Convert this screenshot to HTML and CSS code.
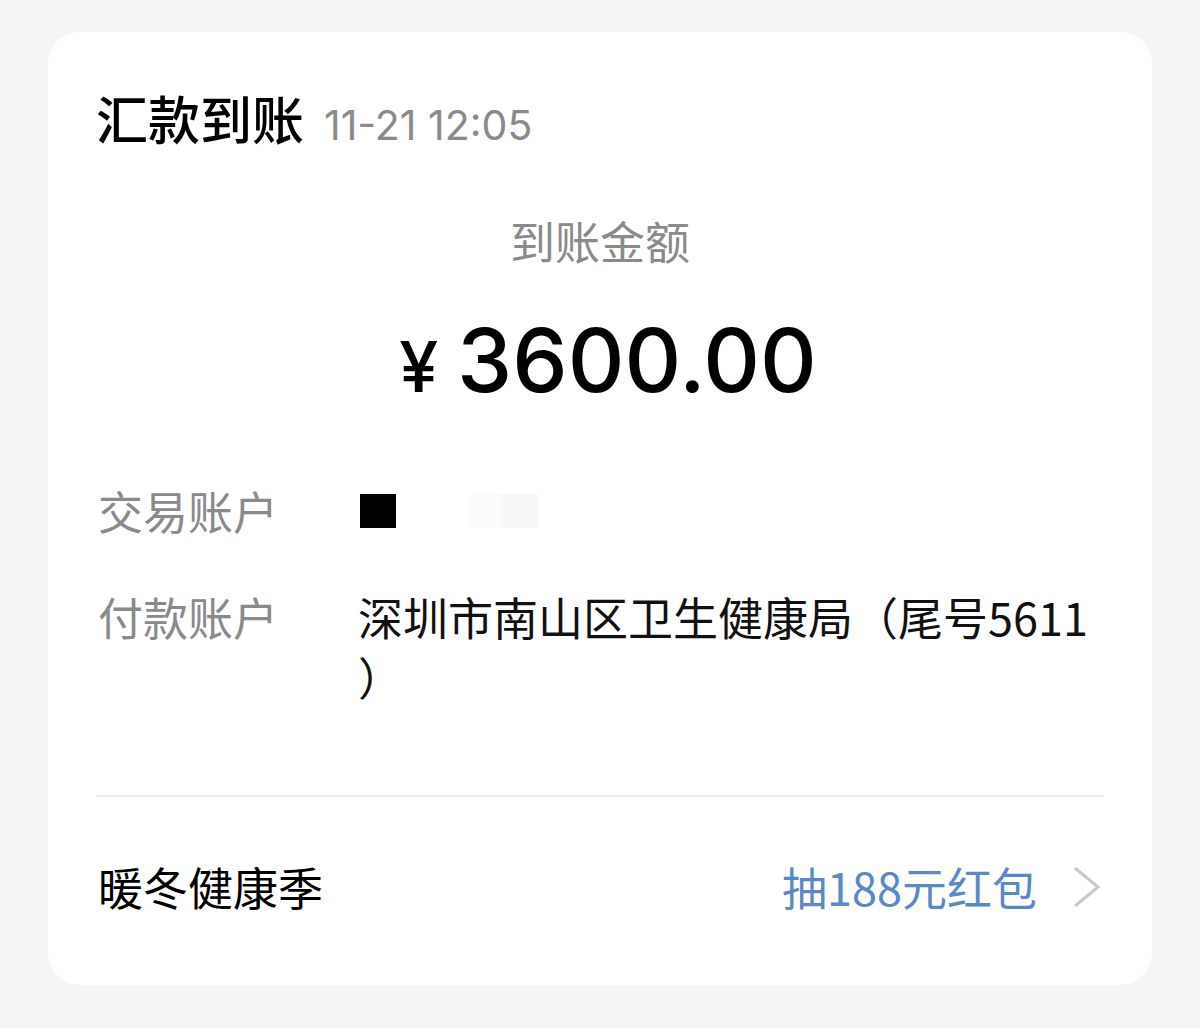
FILE: index.html
```html
<!DOCTYPE html>
<html lang="zh-CN">
  <head>
    <meta charset="UTF-8" />
    <meta name="viewport" content="width=device-width, initial-scale=1.0" />
    <title>汇款到账</title>
    <link rel="stylesheet" href="styles.css">
  </head>
  <body>
    <div class="page">
      <div class="card">
        <div class="card-head">
          <span class="title">汇款到账</span>
          <span class="time">11-21 12:05</span>
        </div>

        <div class="amount-box">
          <div class="amount-label">到账金额</div>
          <div class="amount">
            <span class="yen">¥</span>
            <span class="num">3600.00</span>
          </div>
        </div>

        <div class="rows">
          <div class="row">
            <div class="row-label">交易账户</div>
            <div class="row-value masked">
              <span class="mask mask-dark"></span>
              <span class="mask mask-light"></span>
              <span class="mask mask-lighter"></span>
            </div>
          </div>
          <div class="row">
            <div class="row-label">付款账户</div>
            <div class="row-value">深圳市南山区卫生健康局（尾号5611<br>）</div>
          </div>
        </div>

        <div class="promo">
          <span class="promo-name">暖冬健康季</span>
          <span class="promo-link">
            抽188元红包
            <svg class="chevron" width="28" height="42" viewBox="0 0 28 42">
              <path d="M2 2 L25 21 L2 40" fill="none" stroke="#c8c8c8" stroke-width="3" />
            </svg>
          </span>
        </div>
      </div>
    </div>
  </body>
</html>
```

FILE: styles.css
```css
* {
  margin: 0;
  padding: 0;
  box-sizing: border-box;
}

body {
  background: #f5f5f5;
  font-family: "Inter", "Noto Sans CJK SC", sans-serif;
  color: #000;
}

.page {
  padding: 32px 48px 44px;
}

.card {
  background: #fff;
  border-radius: 32px;
  padding: 0 48px;
}

.card-head {
  display: flex;
  align-items: baseline;
  gap: 20px;
  padding-top: 50px;
  line-height: 72px;
}

.title {
  font-size: 52px;
  font-family: "Noto Sans CJK SC", sans-serif;
  font-weight: 500;
}

.time {
  font-size: 41px;
  color: #8a8a8a;
}

.amount-box {
  display: flex;
  flex-direction: column;
  align-items: center;
  padding-top: 50px;
}

.amount-label {
  font-family: "Noto Sans CJK SC", sans-serif;
  font-size: 45px;
  line-height: 60px;
  color: #8a8a8a;
}

.amount {
  display: flex;
  align-items: baseline;
  gap: 19px;
  margin-top: 39px;
  padding-left: 16px;
  line-height: 100px;
}

.yen {
  font-size: 70px;
  font-weight: 500;
}

.num {
  font-size: 88px;
  font-weight: 500;
}

.rows {
  padding-top: 64px;
}

.row {
  display: grid;
  grid-template-columns: 262px 1fr;
  font-family: "Noto Sans CJK SC", sans-serif;
  font-size: 45px;
  line-height: 60px;
  margin-bottom: 46px;
}

.row-label {
  color: #8a8a8a;
  padding-left: 2px;
}

.row-value {
  color: #111;
}

.masked {
  display: flex;
  align-items: center;
}

.mask {
  display: block;
  height: 34px;
}

.mask-dark {
  width: 36px;
  background: #000;
  margin-left: 2px;
  margin-right: 72px;
}

.mask-light {
  width: 33px;
  background: #fcfcfc;
}

.mask-lighter {
  width: 37px;
  background: #f8f8f8;
}

.promo {
  display: flex;
  align-items: center;
  justify-content: space-between;
  border-top: 2px solid #ececec;
  margin-top: 88px;
  height: 190px;
  padding: 0 3px 9px 2px;
  font-family: "Noto Sans CJK SC", sans-serif;
  font-size: 45px;
}

.promo-link {
  display: flex;
  align-items: center;
  gap: 36px;
  color: #5b88c8;
}

.chevron {
  display: block;
}
```
